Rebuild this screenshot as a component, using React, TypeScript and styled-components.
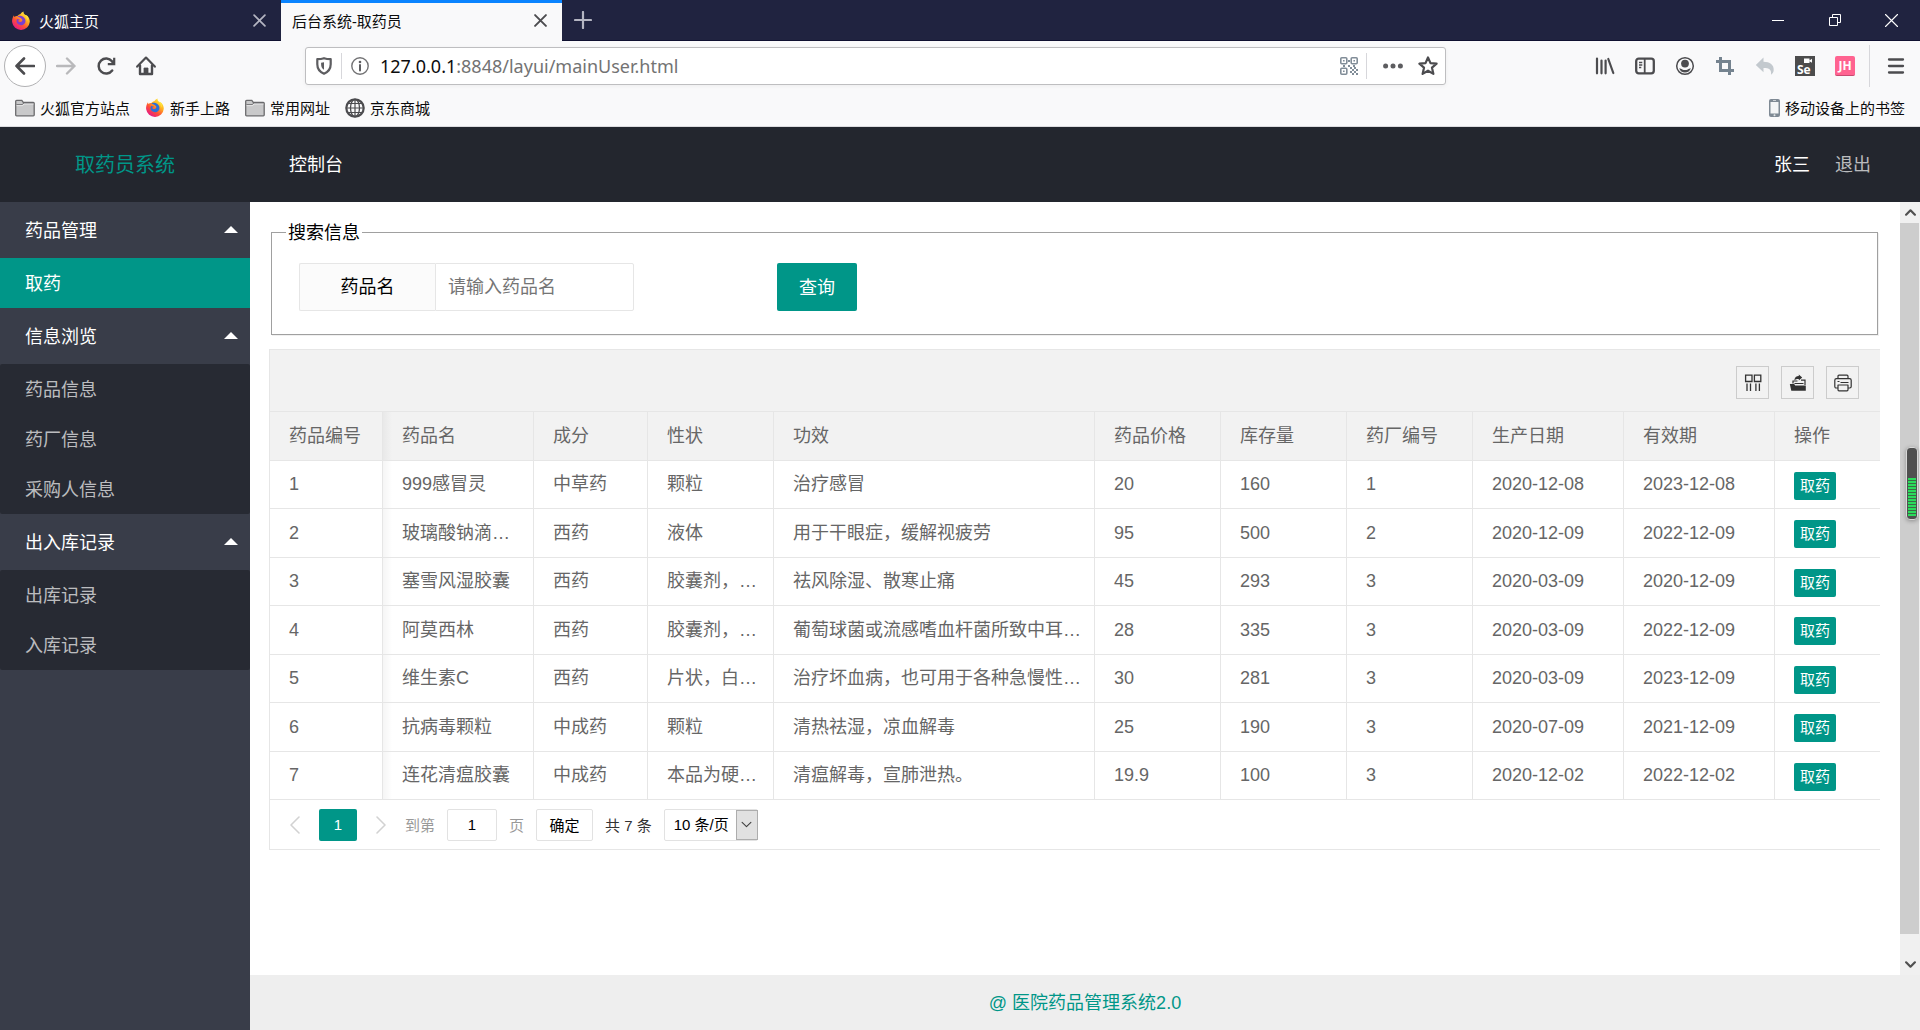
import React from "react";
import styled, { createGlobalStyle, css } from "styled-components";

const TEAL = "#009688";
const LINE = "#e6e6e6";

const GlobalStyle = createGlobalStyle`
  *, *::before, *::after { box-sizing: border-box; }
  body {
    margin: 0;
    font-family: "Liberation Sans", "Noto Sans CJK SC", sans-serif;
    font-size: 18px;
    color: #000;
    background: #fff;
  }
  button, input, select { font: inherit; color: inherit; margin: 0; }
  a { color: inherit; text-decoration: none; }
`;

/* ---------- browser window ---------- */

const Window = styled.div`
  height: 100vh;
  display: flex;
  flex-direction: column;
  overflow: hidden;
`;

const Chrome = styled.header`
  flex: none;
  font-family: "Noto Sans", "Noto Sans CJK SC", sans-serif;
  font-size: 15px;
  background: #f9f9fa;
  border-bottom: 1px solid #dcdcdf;
`;

const TabBar = styled.div`
  display: flex;
  height: 41px;
  background: #202340;
  box-shadow: inset 0 -1px 0 #0f1030;
  color: #fff;
`;

const Tab = styled.div<{ $active?: boolean }>`
  display: flex;
  align-items: center;
  gap: 8px;
  width: 281px;
  padding: 0 15px 0 11px;
  ${(p) =>
    p.$active &&
    css`
      background: #f9f9fa;
      color: #0c0c0d;
      border-top: 3px solid #0a84ff;
      padding-bottom: 3px;
    `}
`;

const TabTitle = styled.span`
  flex: 1;
  line-height: 20px;
`;

const IconButton = styled.button<{ $color?: string }>`
  display: inline-flex;
  align-items: center;
  justify-content: center;
  width: 20px;
  height: 20px;
  padding: 0;
  border: 0;
  background: none;
  color: ${(p) => p.$color ?? "#4c4c4f"};
  svg { display: block; flex: none; }
`;

const TabClose = styled(IconButton)`
  width: 14px;
`;

const NewTab = styled(IconButton)`
  width: 42px;
  height: 41px;
  color: #b4b5c2;
  padding-bottom: 1px;
`;

const WindowControls = styled.div`
  display: flex;
  margin-left: auto;
`;

const WindowButton = styled(IconButton)`
  width: 57px;
  height: 40px;
  color: #fff;
`;

const NavBar = styled.div`
  display: flex;
  align-items: center;
  height: 50px;
  padding: 0 14px 0 4px;
`;

const NavGroup = styled.div`
  display: flex;
  align-items: center;
  gap: 20px;
`;

const BackButton = styled.button`
  display: flex;
  align-items: center;
  justify-content: center;
  width: 42px;
  height: 42px;
  margin-right: -10px;
  padding: 0;
  border: 1px solid #b1b1b3;
  border-radius: 50%;
  background: #fff;
  color: #4c4c4f;
`;

const UrlBar = styled.div`
  display: flex;
  align-items: center;
  flex: 0 1 1141px;
  height: 38px;
  margin-left: 149px;
  padding: 0 7px 0 8px;
  border: 1px solid #bebec0;
  border-radius: 3px;
  background: #fff;
  box-shadow: 0 1px 4px rgba(0, 0, 0, 0.05);
`;

const UrlText = styled.div`
  flex: 1;
  padding-left: 10px;
  font-size: 18px;
  line-height: 26px;
  color: #737373;
  white-space: nowrap;
  b { font-weight: 400; color: #0c0c0d; }
`;

const UrlActions = styled.div`
  display: flex;
  align-items: center;
  gap: 15px;
`;

const Divider = styled.i<{ $h: number; $l: number; $r: number }>`
  width: 1px;
  height: ${(p) => p.$h}px;
  margin: 0 ${(p) => p.$r}px 0 ${(p) => p.$l}px;
  background: #d7d7db;
`;

const Extensions = styled(NavGroup)`
  margin-left: auto;
`;

const SeBadge = styled.span`
  position: relative;
  display: flex;
  align-items: flex-end;
  width: 20px;
  height: 20px;
  padding-left: 2px;
  background: #4c4c4c;
  color: #fff;
  font: 700 12px/13px "Open Sans", sans-serif;
  svg { position: absolute; right: 2px; top: 2px; }
`;

const JhBadge = styled.span`
  display: flex;
  align-items: center;
  justify-content: center;
  width: 20px;
  height: 20px;
  border-radius: 2px;
  border-bottom: 1px solid #c84a70;
  background: #ff6390;
  color: #fff;
  font: 700 12px/18px "Open Sans", sans-serif;
`;

const Bookmarks = styled.nav`
  display: flex;
  align-items: center;
  gap: 15px;
  height: 35px;
  padding: 0 15px 1px;
  color: #0c0c0d;
`;

const Bookmark = styled.a<{ $end?: boolean }>`
  display: flex;
  align-items: center;
  gap: 5px;
  line-height: 20px;
  margin-left: ${(p) => (p.$end ? "auto" : "0")};
`;

/* ---------- admin layout ---------- */

const TopBar = styled.div`
  display: flex;
  align-items: center;
  flex: none;
  height: 75px;
  padding-right: 49px;
  background: #23262e;
  color: #fff;
  line-height: 26px;
`;

const Logo = styled.div`
  width: 250px;
  text-align: center;
  font-size: 20px;
  color: ${TEAL};
`;

const TopLink = styled.a<{ $dim?: boolean; $first?: boolean }>`
  margin-left: ${(p) => (p.$first ? 39 : 25)}px;
  color: ${(p) => (p.$dim ? "rgba(255,255,255,.7)" : "#fff")};
`;

const Spacer = styled.span`
  flex: 1;
`;

const Body = styled.div`
  display: flex;
  flex: 1;
  min-height: 0;
`;

const Sidebar = styled.nav`
  flex: none;
  width: 250px;
  background: #393d49;
`;

const GroupTitle = styled.button`
  display: flex;
  align-items: center;
  justify-content: space-between;
  width: 100%;
  height: 56px;
  padding: 0 12px 2px 25px;
  border: 0;
  background: none;
  color: #fff;
`;

const SubMenu = styled.ul`
  margin: 0;
  padding: 0;
  list-style: none;
  border-radius: 2px;
  background: rgba(0, 0, 0, 0.3);
`;

const SubLink = styled.a<{ $active?: boolean }>`
  display: block;
  padding: 2px 0 0 25px;
  line-height: 48px;
  color: ${(p) => (p.$active ? "#fff" : "rgba(255,255,255,.7)")};
  background: ${(p) => (p.$active ? TEAL : "transparent")};
`;

const Right = styled.div`
  display: flex;
  flex-direction: column;
  flex: 1;
  min-width: 0;
`;

const Scroller = styled.div`
  display: flex;
  flex: 1;
  min-height: 0;
`;

const Main = styled.main`
  flex: 1;
  min-width: 0;
  padding: 18px 20px 0 19px;
  overflow: hidden;
`;

const ScrollBar = styled.div`
  position: relative;
  display: flex;
  flex-direction: column;
  flex: none;
  width: 20px;
  background: #f0f0f0;
  color: #505050;
`;

const ScrollArrow = styled(IconButton)`
  height: 21px;
  color: #505050;
`;

const ScrollThumb = styled.div`
  flex: 1;
  margin: 0 1px 20px 0;
  background: #cdcdcd;
`;

const Battery = styled.div`
  position: absolute;
  right: 2px;
  top: 245px;
  width: 12px;
  height: 73px;
  padding: 30px 1px 3px;
  border: 1px solid #d8d8d8;
  border-radius: 4px;
  background: #505050;
  box-shadow: 0 1px 4px rgba(0, 0, 0, 0.3);
`;

const Charge = styled.div`
  height: 100%;
  background: repeating-linear-gradient(#2bdc5c 0 2px, #3c6b48 2px 3px);
`;

const Footer = styled.footer`
  flex: none;
  height: 55px;
  padding-top: 2px;
  background: #eee;
  color: ${TEAL};
  text-align: center;
  line-height: 53px;
`;

/* ---------- search ---------- */

const SearchBox = styled.fieldset`
  min-width: 0;
  margin: 0 2px 14px;
  padding: 19px 0 23px 14px;
  border: 1px solid #a0a0a0;
  box-shadow: 1px 1px 0 #f0f0f0;
`;

const Legend = styled.legend`
  padding: 3px 2px 0;
  line-height: 21px;
`;

const SearchRow = styled.form`
  display: flex;
  padding-left: 13px;
`;

const FieldLabel = styled.label`
  width: 136px;
  height: 48px;
  border: 1px solid ${LINE};
  border-right: 0;
  border-radius: 2px 0 0 2px;
  background: #fbfbfb;
  line-height: 46px;
  text-align: center;
`;

const FieldInput = styled.input`
  width: 199px;
  height: 48px;
  padding: 0 12px;
  border: 1px solid ${LINE};
  border-radius: 0 2px 2px 0;
  background: #fff;
  outline: 0;
  &::placeholder { color: #757575; opacity: 1; }
`;

const SearchButton = styled.button`
  width: 80px;
  height: 48px;
  margin-left: 143px;
  padding: 0 0 2px;
  border: 0;
  border-radius: 2px;
  background: ${TEAL};
  color: #fff;
`;

/* ---------- table ---------- */

const TableView = styled.section`
  border-top: 1px solid ${LINE};
  border-left: 1px solid ${LINE};
  color: #666;
`;

const TableTools = styled.div`
  display: flex;
  justify-content: flex-end;
  gap: 12px;
  height: 62px;
  padding: 16px 21px 0 0;
  border-bottom: 1px solid ${LINE};
  background: #f2f2f2;
`;

const ToolButton = styled.button`
  display: flex;
  align-items: center;
  justify-content: center;
  width: 33px;
  height: 33px;
  padding: 0;
  border: 1px solid #ccc;
  background: none;
  color: #333;
`;

const Table = styled.table`
  width: 100%;
  table-layout: fixed;
  border-collapse: separate;
  border-spacing: 0;
  tbody tr:nth-child(odd) { height: 48px; }
  thead tr, tbody tr:nth-child(even) { height: 49px; }
  thead { background: #f2f2f2; }
`;

const cell = css`
  padding: 0 12px 0 19px;
  border-right: 1px solid ${LINE};
  border-bottom: 1px solid ${LINE};
  font-weight: 400;
  line-height: 26px;
  text-align: left;
  white-space: nowrap;
  overflow: hidden;
  text-overflow: ellipsis;
  &:nth-child(2) {
    background-image: linear-gradient(to right, rgba(0, 0, 0, 0.04), transparent 9px);
  }
  &:last-child { border-right: 0; }
`;

const Th = styled.th`
  ${cell}
`;

const Td = styled.td`
  ${cell}
  padding-bottom: 1px;
`;

const ActionTd = styled.td`
  ${cell}
  padding-top: 2px;
`;

const RowButton = styled.button`
  display: block;
  width: 42px;
  height: 28px;
  padding: 0;
  border: 0;
  border-radius: 2px;
  background: ${TEAL};
  color: #fff;
  font-size: 15px;
`;

/* ---------- pager ---------- */

const Pager = styled.div`
  display: flex;
  align-items: center;
  height: 50px;
  padding: 0 0 0 15px;
  border-bottom: 1px solid ${LINE};
  font-size: 15px;
  color: #333;
`;

const PagerArrow = styled(IconButton)`
  color: #d2d2d2;
`;

const CurrentPage = styled.button`
  width: 38px;
  height: 32px;
  margin: 0 14px;
  padding: 0;
  border: 0;
  border-radius: 2px;
  background: ${TEAL};
  color: #fff;
`;

const PageJump = styled.label`
  display: flex;
  align-items: center;
  gap: 12px;
  margin-left: 14px;
  color: #999;
`;

const PageInput = styled.input`
  width: 50px;
  height: 32px;
  padding: 0;
  border: 1px solid #e2e2e2;
  border-radius: 2px;
  color: #000;
  text-align: center;
`;

const ConfirmButton = styled.button`
  width: 57px;
  height: 32px;
  margin: 0 12px;
  padding: 0;
  border: 1px solid #e2e2e2;
  border-radius: 2px;
  background: #fff;
  color: #000;
`;

const SelectWrap = styled.div`
  position: relative;
  width: 94px;
  height: 32px;
  margin-left: 12px;
`;

const LimitSelect = styled.select`
  appearance: none;
  width: 100%;
  height: 100%;
  padding: 0 0 0 9px;
  border: 1px solid #e2e2e2;
  border-radius: 2px;
  background: #fff;
  color: #000;
`;

const SelectArrow = styled.span`
  position: absolute;
  top: 1px;
  right: 0;
  display: flex;
  align-items: center;
  justify-content: center;
  width: 22px;
  height: 30px;
  border: 1px solid #adadad;
  background: #e1e1e1;
  color: #404040;
  pointer-events: none;
`;

/* ---------- icons ---------- */

type LineProps = { d: string; size?: number; w?: number; box?: number; fill?: string };
const Line = ({ d, size = 20, w = 2, box = 20, fill = "none" }: LineProps) => (
  <svg width={size} height={size} viewBox={`0 0 ${box} ${box}`} fill={fill} stroke="currentColor" strokeWidth={w} strokeLinecap="round" strokeLinejoin="round" aria-hidden="true">
    <path d={d} />
  </svg>
);

const Firefox = ({ id, core }: { id: string; core: string }) => (
  <svg width="20" height="20" viewBox="0 0 20 20" aria-hidden="true">
    <defs>
      <linearGradient id={id} x1="0.85" y1="0.05" x2="0.2" y2="0.95">
        <stop offset="0" stopColor="#fff24a" />
        <stop offset="0.35" stopColor="#ffb01f" />
        <stop offset="0.65" stopColor="#ff4f36" />
        <stop offset="1" stopColor="#e3158b" />
      </linearGradient>
    </defs>
    <path d="M12.6.4c-.3 1.6.4 2.5 1.7 3.6l1 .2c.9.4 1.6 1 2 1.8.9 1.3 1.5 2.9 1.5 4.7a8.9 8.9 0 0 1-17.7.4C.9 8.700 1.600 6.200 3 4.300c0 .8.2 1.200.5 1.600.6-.7 1.600-1.100 2.800-1 .9-1 2-1.700 3.200-1.900.6-1.200 1.700-2.200 3.100-2.600z" fill={`url(#${id})`} />
    <path d="M6.300 5.400c1.300-.9 3-.9 4.200-.3 2.400.8 4 2.700 4 5 0 2.500-2 4.200-4.400 4.200-2.600 0-4.600-1.900-4.600-4.200 0-1 .4-1.800 1-2.300.3.5 1 .7 2.200.8-.3.8-1 1.100-1.700 1.200.4 1 1.500 1.600 2.700 1.200 1-.3 1.800-1 1.600-2.200-.3-1.500-2.300-2.300-5-3.400z" fill={core} />
    <path d="M13 3.500c2.400 1.800 3.300 4 2.900 6.500 1-1 1.200-2.600.8-4.400-.8-1.200-2.200-1.800-3.700-2.100z" fill="#ffe83d" opacity=".8" />
  </svg>
);

const Folder = () => (
  <svg width="20" height="20" viewBox="0 0 20 20" aria-hidden="true">
    <path d="M.7 17V3.200c0-.5.3-.9.9-.9h5.200l1.500 2h10c.6 0 .9.4.9.9V17c0 .5-.3.8-.9.8H1.600c-.6 0-.9-.3-.9-.8z" fill="#c9c9ca" stroke="#6b6b6d" strokeWidth="1.300" />
    <path d="M1.400 6.700h5.800l1.400-1.600h10" fill="none" stroke="#6b6b6d" />
    <path d="M1.500 7.600h6.200L9 6h9.500" fill="none" stroke="#f2f2f2" strokeWidth=".8" />
  </svg>
);

const Globe = () => (
  <svg width="20" height="20" viewBox="0 0 20 20" fill="none" stroke="#4c4c4f" aria-hidden="true">
    <circle cx="10" cy="10" r="8.700" strokeWidth="2.200" />
    <path d="M10 1v18M1 10h18M3 5.500h14M3 14.500h14" strokeWidth="1.200" />
    <ellipse cx="10" cy="10" rx="4.500" ry="8.600" strokeWidth="1.300" />
  </svg>
);

const Phone = () => (
  <svg width="11" height="18" viewBox="0 0 11 18" aria-hidden="true">
    <rect x="0" y="0" width="11" height="18" rx="2" fill="#7f8a94" />
    <rect x="1.500" y="3" width="8" height="11.500" fill="#f4f5f6" />
    <circle cx="5.500" cy="16.200" r="1" fill="#e3e6e8" />
    <path d="M4 1.500h3" stroke="#dfe3e6" strokeWidth=".8" />
  </svg>
);

const Shield = () => (
  <svg width="18" height="18" viewBox="0 0 18 18" aria-hidden="true">
    <path d="M9 1.200c2.200.8 4.300 1 6.700 1v5c0 4.300-2.300 7.600-6.700 9.500-4.400-1.900-6.700-5.200-6.700-9.500v-5c2.400 0 4.500-.2 6.700-1z" fill="none" stroke="#5d5d60" strokeWidth="2.200" strokeLinejoin="round" />
    <path d="M9 5.200v7.600C7 11.500 6.100 9.700 6.100 7.300V5.700C7.200 5.700 8 5.500 9 5.200z" fill="#5d5d60" />
  </svg>
);

const Info = () => (
  <svg width="20" height="20" viewBox="0 0 20 20" aria-hidden="true">
    <circle cx="10" cy="10" r="8.200" fill="none" stroke="#737375" strokeWidth="1.400" />
    <circle cx="10" cy="6" r="1.300" fill="#5d5d60" />
    <path d="M10 9v5.500" stroke="#5d5d60" strokeWidth="2" strokeLinecap="round" />
  </svg>
);

const Qr = () => (
  <svg width="18" height="18" viewBox="0 0 18 18" aria-hidden="true">
    <g fill="none" stroke="#818d98" strokeWidth="1.600">
      <rect x=".8" y=".8" width="6" height="6" rx="1" />
      <rect x="11.200" y=".8" width="6" height="6" rx="1" />
      <rect x=".8" y="11.200" width="6" height="6" rx="1" />
    </g>
    <path d="M3 3h1.600v1.600H3zM13.400 3H15v1.600h-1.600zM3 13.400h1.600V15H3zM8 3h2v2H8zM3 8h2v2H3zM13 8h2v2h-2zM8 8h2v2H8zM10 10h2v2h-2zM14 10h2v2h-2zM12 12h2v2h-2zM16 12h2v2h-2zM10 14h2v2h-2zM14 14h2v2h-2zM12 16h2v2h-2zM16 16h2v2h-2z" fill="#818d98" />
  </svg>
);

const Dots = () => (
  <svg width="20" height="20" viewBox="0 0 20 20" fill="#5d5d60" aria-hidden="true">
    <circle cx="2.600" cy="10" r="2.500" />
    <circle cx="10" cy="10" r="2.500" />
    <circle cx="17.400" cy="10" r="2.500" />
  </svg>
);

const Reload = () => (
  <svg width="20" height="20" viewBox="0 0 20 20" fill="none" stroke="currentColor" strokeWidth="2.500" strokeLinecap="round" aria-hidden="true">
    <path d="M16.200 14.500A7.500 7.500 0 1 1 16 5.300" />
    <path d="M18.200 1.800v6.400h-6.400" strokeWidth="2.200" strokeLinecap="butt" />
    <path d="M18.500 3.500v5h-5z" fill="currentColor" stroke="none" />
  </svg>
);

const Home = () => (
  <svg width="20" height="20" viewBox="0 0 20 20" fill="none" stroke="currentColor" strokeLinejoin="round" strokeLinecap="round" aria-hidden="true">
    <path d="M1.200 10.600 10 1.600l8.800 9" strokeWidth="2.200" />
    <path d="M4 9.500V18h12V9.500" strokeWidth="2.400" />
    <path d="M8 17.500V12h4v5.500z" fill="currentColor" strokeWidth=".8" />
  </svg>
);

const Library = () => (
  <svg width="20" height="20" viewBox="0 0 20 20" fill="none" stroke="currentColor" strokeWidth="2.200" strokeLinecap="round" aria-hidden="true">
    <path d="M2 2.500v14.800M6.500 4.500v12.800M10.600 4.500v12.800M13.300 3l5 14" />
  </svg>
);

const SidebarIcon = () => (
  <svg width="20" height="20" viewBox="0 0 20 20" fill="none" stroke="currentColor" aria-hidden="true">
    <rect x="1.200" y="2.700" width="17.600" height="14.600" rx="2.500" strokeWidth="2.300" />
    <path d="M9.700 3v14" strokeWidth="1.800" />
    <path d="M4 6.500h3.300M4 9h3.300M4 11.500h2.300" strokeWidth="1.300" />
  </svg>
);

const Account = () => (
  <svg width="20" height="20" viewBox="0 0 20 20" aria-hidden="true">
    <circle cx="10" cy="10" r="8.300" fill="none" stroke="#4c4c4f" strokeWidth="1.500" />
    <circle cx="10" cy="7.600" r="3.900" fill="#4c4c4f" />
    <path d="M4.200 12.200c1.300.1 2.100.7 3 1.200 1.800.8 3.800.8 5.600 0 .9-.5 1.700-1.100 3-1.200-.8 2.700-3 4.400-5.800 4.400s-5-1.700-5.800-4.400z" fill="#4c4c4f" />
  </svg>
);

const CropIcon = () => (
  <svg width="20" height="20" viewBox="0 0 20 20" fill="none" stroke="#75838f" strokeWidth="3" aria-hidden="true">
    <path d="M5.500 1v13.500H19M1 5.500h13.500V19" />
  </svg>
);

const Undo = () => (
  <svg width="20" height="20" viewBox="0 0 20 20" fill="#c3c9ce" aria-hidden="true">
    <path d="M8.500 1.500v4.300c6.500 0 10.500 3.300 10.200 8.200-.1 2-1 3.500-2.700 4.700.7-4.800-1.500-6.700-7.500-6.700v4.200L.8 8.900z" />
  </svg>
);

const Menu = () => (
  <svg width="18" height="20" viewBox="0 0 18 20" fill="none" stroke="currentColor" strokeWidth="2.300" strokeLinecap="round" aria-hidden="true">
    <path d="M2 3.500h14M2 10h14M2 16.500h14" />
  </svg>
);

const Camera = () => (
  <svg width="9" height="6" viewBox="0 0 9 6" fill="#fff" aria-hidden="true">
    <path d="M0 .5h5.500v4.500H0zM5.500 2.500 8 .8v4L5.500 3.300z" />
  </svg>
);

const Caret = () => (
  <svg width="14" height="7" viewBox="0 0 14 7" fill="#fff" aria-hidden="true">
    <path d="M7 0l7 7H0z" />
  </svg>
);

const Columns = () => (
  <svg width="18" height="18" viewBox="0 0 18 18" fill="none" stroke="currentColor" strokeWidth="1.300" aria-hidden="true">
    <path d="M1.600 1.200h6.400v6.300H1.600zM10.400 1.200h6.400v6.300h-6.400zM3 9.500V17M6.500 9.500V17M11.900 9.500V17M15.400 9.500V17" />
  </svg>
);

const Export = () => (
  <svg width="18" height="18" viewBox="0 0 18 18" aria-hidden="true">
    <path d="M.8 10h4.400l1 1.600h10.600v5.200H2.300z" fill="currentColor" />
    <path d="M4 9.500V7h4.500M12 6.200h4V11M5.500 9.500h9" fill="none" stroke="currentColor" strokeWidth="1.200" />
    <path d="M5.300 6.500c.3-3 2-4.400 4.500-4.400V.6l3.400 3-3.400 2.900V4.900C8 4.800 6.700 5.200 5.300 6.500z" fill="currentColor" />
  </svg>
);

const Printer = () => (
  <svg width="18" height="18" viewBox="0 0 18 18" fill="none" stroke="currentColor" strokeWidth="1.200" strokeLinejoin="round" aria-hidden="true">
    <path d="M4 4.600V2.200c0-.6.400-1 1-1h8c.6 0 1 .4 1 1v2.400" />
    <path d="M4 14H2.200c-.8 0-1.400-.6-1.400-1.400V6.200c0-.9.700-1.600 1.600-1.600h13.200c.9 0 1.600.7 1.600 1.600v6.400c0 .8-.6 1.400-1.400 1.400H14" />
    <path d="M4 11h10v4.800c0 .6-.4 1-1 1H5c-.6 0-1-.4-1-1zM3.500 7.500h2M6.500 8.500h8" />
  </svg>
);

const Restore = () => (
  <svg width="12" height="12" viewBox="0 0 12 12" fill="none" stroke="currentColor" aria-hidden="true">
    <path d="M.5 3.500h8v8h-8zM3.500 3.500v-3h8v8h-3" />
  </svg>
);

/* ---------- data ---------- */

const menu = [
  { title: "药品管理", items: ["取药"] },
  { title: "信息浏览", items: ["药品信息", "药厂信息", "采购人信息"] },
  { title: "出入库记录", items: ["出库记录", "入库记录"] },
];

const columns: { name: string; width?: number }[] = [
  { name: "药品编号", width: 113 },
  { name: "药品名", width: 151 },
  { name: "成分", width: 114 },
  { name: "性状", width: 126 },
  { name: "功效" },
  { name: "药品价格", width: 126 },
  { name: "库存量", width: 126 },
  { name: "药厂编号", width: 126 },
  { name: "生产日期", width: 151 },
  { name: "有效期", width: 151 },
  { name: "操作", width: 105 },
];

const rows = [
  ["1", "999感冒灵", "中草药", "颗粒", "治疗感冒", "20", "160", "1", "2020-12-08", "2023-12-08"],
  ["2", "玻璃酸钠滴…", "西药", "液体", "用于干眼症，缓解视疲劳", "95", "500", "2", "2020-12-09", "2022-12-09"],
  ["3", "塞雪风湿胶囊", "西药", "胶囊剂，…", "祛风除湿、散寒止痛", "45", "293", "3", "2020-03-09", "2020-12-09"],
  ["4", "阿莫西林", "西药", "胶囊剂，…", "葡萄球菌或流感嗜血杆菌所致中耳…", "28", "335", "3", "2020-03-09", "2022-12-09"],
  ["5", "维生素C", "西药", "片状，白…", "治疗坏血病，也可用于各种急慢性…", "30", "281", "3", "2020-03-09", "2023-12-09"],
  ["6", "抗病毒颗粒", "中成药", "颗粒", "清热祛湿，凉血解毒", "25", "190", "3", "2020-07-09", "2021-12-09"],
  ["7", "连花清瘟胶囊", "中成药", "本品为硬…", "清瘟解毒，宣肺泄热。", "19.9", "100", "3", "2020-12-02", "2022-12-02"],
];

/* ---------- sections ---------- */

const BrowserChrome = () => (
  <Chrome>
    <TabBar>
      <Tab>
        <Firefox id="fx-tab" core="#7a3fd0" />
        <TabTitle>火狐主页</TabTitle>
        <TabClose $color="#b4b5c2" aria-label="关闭标签页"><Line d="M1 1l10 10M11 1L1 11" size={13} box={12} w={1.6} /></TabClose>
      </Tab>
      <Tab $active>
        <TabTitle>后台系统-取药员</TabTitle>
        <TabClose aria-label="关闭标签页"><Line d="M1 1l10 10M11 1L1 11" size={13} box={12} w={1.8} /></TabClose>
      </Tab>
      <NewTab aria-label="新建标签页"><Line d="M9 1v16M1 9h16" size={18} box={18} w={2.2} /></NewTab>
      <WindowControls>
        <WindowButton aria-label="最小化"><Line d="M0 6.500h12" size={12} box={12} w={1} /></WindowButton>
        <WindowButton aria-label="还原"><Restore /></WindowButton>
        <WindowButton aria-label="关闭"><Line d="M.5.5l12 12M12.500.5l-12 12" size={13} box={13} w={1.1} /></WindowButton>
      </WindowControls>
    </TabBar>
    <NavBar>
      <NavGroup>
        <BackButton aria-label="后退"><Line d="M19 10H1.500M9 2.500L1.500 10 9 17.500" w={2.6} /></BackButton>
        <IconButton $color="#b9b9bb" aria-label="前进"><Line d="M1 10h17.500M11 2.500l7.500 7.500-7.500 7.500" w={2.4} /></IconButton>
        <IconButton aria-label="刷新"><Reload /></IconButton>
        <IconButton aria-label="主页"><Home /></IconButton>
      </NavGroup>
      <UrlBar>
        <IconButton aria-label="跟踪保护"><Shield /></IconButton>
        <Divider $h={26} $l={7} $r={8} />
        <IconButton aria-label="网站信息"><Info /></IconButton>
        <UrlText role="textbox" aria-label="地址"><b>127.0.0.1</b>:8848/layui/mainUser.html</UrlText>
        <IconButton aria-label="二维码"><Qr /></IconButton>
        <Divider $h={26} $l={7} $r={16} />
        <UrlActions>
          <IconButton aria-label="更多"><Dots /></IconButton>
          <IconButton aria-label="收藏"><Line d="M10 1.500l2.500 5.600 6.100.6-4.600 4 1.400 6.200L10 14.700l-5.400 3.200L6 11.700l-4.600-4 6.100-.6z" w={2.2} /></IconButton>
        </UrlActions>
      </UrlBar>
      <Extensions>
        <IconButton aria-label="书库"><Library /></IconButton>
        <IconButton aria-label="侧栏"><SidebarIcon /></IconButton>
        <IconButton aria-label="账户"><Account /></IconButton>
        <IconButton aria-label="截图"><CropIcon /></IconButton>
        <IconButton aria-label="撤销"><Undo /></IconButton>
        <IconButton aria-label="Selenium"><SeBadge>Se<Camera /></SeBadge></IconButton>
        <IconButton aria-label="JH"><JhBadge>JH</JhBadge></IconButton>
      </Extensions>
      <Divider $h={42} $l={14} $r={16} />
      <IconButton aria-label="菜单"><Menu /></IconButton>
    </NavBar>
    <Bookmarks>
      <Bookmark href="#"><Folder />火狐官方站点</Bookmark>
      <Bookmark href="#"><Firefox id="fx-mark" core="#2a6fd8" />新手上路</Bookmark>
      <Bookmark href="#"><Folder />常用网址</Bookmark>
      <Bookmark href="#"><Globe />京东商城</Bookmark>
      <Bookmark href="#" $end><Phone />移动设备上的书签</Bookmark>
    </Bookmarks>
  </Chrome>
);

const SideMenu = () => (
  <Sidebar>
    {menu.map((group) => (
      <div key={group.title}>
        <GroupTitle aria-expanded="true">{group.title}<Caret /></GroupTitle>
        <SubMenu>
          {group.items.map((item) => (
            <li key={item}><SubLink href="#" $active={item === "取药"}>{item}</SubLink></li>
          ))}
        </SubMenu>
      </div>
    ))}
  </Sidebar>
);

const Search = () => (
  <SearchBox>
    <Legend>搜索信息</Legend>
    <SearchRow onSubmit={(e) => e.preventDefault()}>
      <FieldLabel htmlFor="medicine">药品名</FieldLabel>
      <FieldInput id="medicine" placeholder="请输入药品名" />
      <SearchButton>查询</SearchButton>
    </SearchRow>
  </SearchBox>
);

const MedicineTable = () => (
  <TableView>
    <TableTools>
      <ToolButton aria-label="筛选列"><Columns /></ToolButton>
      <ToolButton aria-label="导出"><Export /></ToolButton>
      <ToolButton aria-label="打印"><Printer /></ToolButton>
    </TableTools>
    <Table>
      <colgroup>
        {columns.map((c) => <col key={c.name} width={c.width} />)}
      </colgroup>
      <thead>
        <tr>{columns.map((c) => <Th key={c.name} scope="col">{c.name}</Th>)}</tr>
      </thead>
      <tbody>
        {rows.map((r) => (
          <tr key={r[0]}>
            {r.map((v, i) => <Td key={columns[i].name}>{v}</Td>)}
            <ActionTd><RowButton>取药</RowButton></ActionTd>
          </tr>
        ))}
      </tbody>
    </Table>
    <Pager>
      <PagerArrow aria-label="上一页"><Line d="M14 2L6 10l8 8" w={1.6} /></PagerArrow>
      <CurrentPage>1</CurrentPage>
      <PagerArrow aria-label="下一页"><Line d="M6 2l8 8-8 8" w={1.6} /></PagerArrow>
      <PageJump>到第<PageInput defaultValue="1" />页</PageJump>
      <ConfirmButton>确定</ConfirmButton>
      <span>共 7 条</span>
      <SelectWrap>
        <LimitSelect aria-label="每页条数" defaultValue="10">
          <option value="10">10 条/页</option>
          <option value="20">20 条/页</option>
        </LimitSelect>
        <SelectArrow><Line d="M1 3l4 4 4-4" size={11} box={10} w={1} /></SelectArrow>
      </SelectWrap>
    </Pager>
  </TableView>
);

export default function App() {
  return (
    <>
      <GlobalStyle />
      <Window>
        <BrowserChrome />
        <TopBar>
          <Logo>取药员系统</Logo>
          <TopLink href="#" $first>控制台</TopLink>
          <Spacer />
          <TopLink href="#">张三</TopLink>
          <TopLink href="#" $dim>退出</TopLink>
        </TopBar>
        <Body>
          <SideMenu />
          <Right>
            <Scroller>
              <Main>
                <Search />
                <MedicineTable />
              </Main>
              <ScrollBar>
                <ScrollArrow aria-label="向上滚动"><Line d="M1 7l4-4 4 4" size={11} box={10} w={2} /></ScrollArrow>
                <ScrollThumb />
                <ScrollArrow aria-label="向下滚动"><Line d="M1 3l4 4 4-4" size={11} box={10} w={2} /></ScrollArrow>
                <Battery><Charge /></Battery>
              </ScrollBar>
            </Scroller>
            <Footer>@ 医院药品管理系统2.0</Footer>
          </Right>
        </Body>
      </Window>
    </>
  );
}
